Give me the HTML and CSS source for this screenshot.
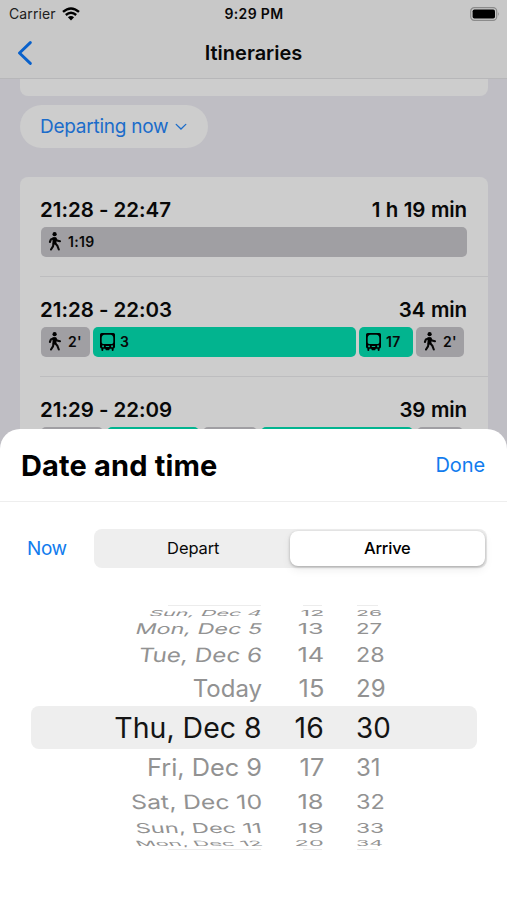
FILE: index.html
```html
<!DOCTYPE html>
<html lang="en">
<head>
<meta charset="utf-8">
<title>Itineraries</title>
<link rel="stylesheet" href="styles.css">
</head>
<body>
<svg width="0" height="0" class="defs">
  <symbol id="walk" viewBox="0 0 14 19">
    <circle cx="6.6" cy="2.2" r="2.1"/>
    <path d="M1.9 10 2.9 7.4 5.8 6.3 7.4 6.3 9 8.6 12 9.3M5.6 11.4 5 14.4 3 17.5M7.2 11.4 9.4 13.8 10.8 17.5" fill="none" stroke="currentColor" stroke-width="2.1" stroke-linecap="round" stroke-linejoin="round"/>
    <path d="M4.6 5.4h3.7l.2 6.8-4 .2z"/>
  </symbol>
  <symbol id="bus" viewBox="0 0 15 18">
    <path fill-rule="evenodd" d="M1.6 0h11.8Q15 0 15 1.6V13.4Q15 15.3 13.6 15.6V17Q13.6 18 12.7 18T11.7 17V15.8H9.8l-.7 1.4H5.9l-.7-1.4H3.3V17Q3.3 18 2.3 18T1.4 17V15.6Q0 15.3 0 13.4V1.6Q0 0 1.6 0ZM4.6 1.7Q1.7 2.1 1.7 5V9.3Q1.7 11 3.3 11H11.7Q13.3 11 13.3 9.3V5Q13.3 2.1 10.4 1.7ZM3 12.2a1 1 0 1 0 .1 0ZM12 12.2a1 1 0 1 0 .1 0ZM5.8 13v.9h3.4v-.9Z"/>
  </symbol>
</svg>
<main class="screen">
  <header class="topbar">
    <div class="status">
      <div class="carrier"><span>Carrier</span>
        <svg class="wifi" width="18" height="14" viewBox="0 0 18 14"><g fill="none" stroke="#000" stroke-width="2.4"><path d="M1 4.9Q9-2 17 4.9"/><path d="M3.8 8Q9 3.6 14.2 8"/></g><path d="M5.9 10.2Q9 7.7 12.1 10.2L9 13.4Z"/></svg>
      </div>
      <span class="clock">9:29 PM</span>
      <svg class="battery" width="30" height="14" viewBox="0 0 30 14"><rect x=".7" y=".7" width="26" height="12.6" rx="3.6" fill="none" stroke="#8b8b8b" stroke-width="1.2"/><rect x="2.6" y="2.4" width="22.4" height="9.2" rx="1.8"/><path d="M28 5Q29.8 7 28 9Z" fill="#8b8b8b"/></svg>
    </div>
    <div class="nav">
      <svg class="back" width="16" height="24" viewBox="0 0 16 24"><path d="M13.3 1.6 2.5 12 13.3 22.4" fill="none" stroke="#0961cb" stroke-width="2.9" stroke-linecap="round" stroke-linejoin="round"/></svg>
      <h1>Itineraries</h1>
    </div>
  </header>
  <div class="previous"></div>
  <button class="when"><span>Departing now</span><svg width="12" height="8" viewBox="0 0 12 8"><path d="M1.2 1.4 6 6 10.8 1.4" fill="none" stroke="currentColor" stroke-width="1.3" stroke-linecap="round"/></svg></button>
  <section class="trips">
    <article class="trip">
      <div class="times"><span>21:28 - 22:47</span><span class="dur">1 h 19 min</span></div>
      <div class="legs full"><div class="leg"><svg class="walk"><use href="#walk"/></svg>1:19</div></div>
    </article>
    <article class="trip">
      <div class="times"><span>21:28 - 22:03</span><span class="dur">34 min</span></div>
      <div class="legs direct">
        <div class="leg"><svg class="walk"><use href="#walk"/></svg>2'</div>
        <div class="leg ride"><svg class="bus"><use href="#bus"/></svg>3</div>
        <div class="leg ride"><svg class="bus"><use href="#bus"/></svg>17</div>
        <div class="leg"><svg class="walk"><use href="#walk"/></svg>2'</div>
      </div>
    </article>
    <article class="trip">
      <div class="times"><span>21:29 - 22:09</span><span class="dur">39 min</span></div>
      <div class="legs transfer"><div class="leg"></div><div class="leg ride"></div><div class="leg"></div><div class="leg ride"></div><div class="leg"></div></div>
    </article>
  </section>
  <section class="sheet">
    <header class="sheet-head"><h2>Date and time</h2><a>Done</a></header>
    <div class="mode"><a>Now</a><div class="segments"><span class="seg">Depart</span><span class="seg on">Arrive</span></div></div>
    <div class="wheel">
      <div class="row edge"></div>
      <div class="row u4"><span>Sun, Dec 4</span><span>12</span><span>26</span></div>
      <div class="row u3"><span>Mon, Dec 5</span><span>13</span><span>27</span></div>
      <div class="row u2"><span>Tue, Dec 6</span><span>14</span><span>28</span></div>
      <div class="row u1"><span>Today</span><span>15</span><span>29</span></div>
      <div class="row sel"><span>Thu, Dec 8</span><span>16</span><span>30</span></div>
      <div class="row d1"><span>Fri, Dec 9</span><span>17</span><span>31</span></div>
      <div class="row d2"><span>Sat, Dec 10</span><span>18</span><span>32</span></div>
      <div class="row d3"><span>Sun, Dec 11</span><span>19</span><span>33</span></div>
      <div class="row d4"><span>Mon, Dec 12</span><span>20</span><span>34</span></div>
      <div class="row edge"></div>
    </div>
  </section>
</main>
</body>
</html>
```
FILE: styles.css
```css
* { box-sizing: border-box; }
body { margin: 0; font-family: Inter, "Liberation Sans", sans-serif; color: #080808; }
h1, h2 { margin: 0; }
svg { flex: none; }
.defs { position: absolute; }
.screen { position: relative; width: 507px; height: 900px; overflow: hidden; background: #bfbec4; }

.topbar { height: 79px; background: #c8c8c8; border-bottom: 1px solid #b7b7b9; }
.status { display: grid; grid-template-columns: 1fr auto 1fr; align-items: center; height: 27px; padding: 0 7px 0 9px; font-size: 14px; }
.carrier { display: flex; align-items: center; gap: 6px; color: #202020; letter-spacing: .1px; }
.clock { margin-right: 1px; font-weight: 600; letter-spacing: .35px; }
.battery { justify-self: end; }
.nav { display: grid; grid-template-columns: 1fr auto 1fr; align-items: center; height: 51px; padding: 0 17px; }
.nav h1 { font-size: 20px; font-weight: 600; letter-spacing: 0; }

.previous { height: 17px; margin: 0 19px 0 20px; background: #cdcdcd; border-radius: 0 0 8px 8px; }
.when { display: flex; align-items: center; gap: 7px; width: 188px; height: 43px; margin: 9px 0 0 20px; padding: 0 0 0 20px; border: 0; border-radius: 22px; background: #cdcdcd; color: #1b6cca; font: 400 19px Inter, sans-serif; letter-spacing: -.25px; }

.trips { height: 300px; margin: 29px 19px 0 20px; border-radius: 8px; background: #cdcdcd; overflow: hidden; }
.trip { height: 100px; margin-left: 20px; padding: 20px 21px 0 0; border-bottom: 1px solid #bdbdbf; }
.times { display: flex; justify-content: space-between; height: 30px; line-height: 25px; font-size: 20.5px; font-weight: 600; letter-spacing: -.02px; }
.dur { letter-spacing: -.1px; word-spacing: .5px; }
.legs { display: grid; gap: 3px; height: 30px; padding-left: 1px; }
.direct { grid-template-columns: 49px 263px 54px 48px; }
.transfer { grid-template-columns: 62px 92px 54px 152px 46px; gap: 4px; }
.leg { display: flex; align-items: center; height: 30px; padding: 0 0 1px 7px; gap: 6px; border-radius: 5px; background: #a09fa3; font-size: 14px; font-weight: 600; letter-spacing: .3px; }
.ride { background: #02b48f; gap: 5px; }
.walk { width: 14px; height: 19px; }
.bus { width: 15px; height: 18px; }

.sheet { position: absolute; left: 0; right: 0; bottom: 0; height: 471.5px; border-radius: 20px 20px 0 0; background: #fff; }
.sheet a { color: #117cee; }
.sheet-head { display: flex; justify-content: space-between; align-items: center; height: 73.5px; padding: 0 22px; border-bottom: 1px solid #eee; }
.sheet-head h2 { font-size: 29px; letter-spacing: .15px; color: #000; margin: 1px 0 0 -1px; }
.sheet-head a { font-size: 20px; letter-spacing: -.1px; }
.mode { display: flex; align-items: center; justify-content: space-between; margin-top: 27px; padding: 0 20px 0 27px; }
.mode a { font-size: 19px; letter-spacing: -.4px; }
.segments { display: grid; grid-template-columns: 1fr 1fr; width: 393px; height: 39px; padding: 2px; border-radius: 8px; background: #eee; font-size: 16.5px; }
.seg { display: flex; align-items: center; justify-content: center; padding-bottom: 2px; letter-spacing: -.1px; }
.on { height: 35px; margin-left: -1px; font-weight: 500; letter-spacing: -.2px; color: #000; border-radius: 8px; background: #fff; box-shadow: 0 1px 3px #0004, 0 4px 10px #0001; }

.wheel { margin: 36px 30px 0 31px; }
.row { display: grid; grid-template-columns: 231px 62px 1fr; grid-template-rows: 100%; align-items: center; color: #929292; font-size: 24px; line-height: 1; white-space: nowrap; }
.row span { transform: scale(var(--x), var(--y)); }
.row span:nth-child(1) { justify-self: end; transform: scale(var(--dx, var(--x)), var(--y)) skewX(var(--skew, 0deg)); transform-origin: right center; }
.row span:nth-child(2) { justify-self: end; transform: scale(var(--hx, 1.06), var(--y)); transform-origin: right center; }
.row span:nth-child(3) { padding-left: 32px; transform-origin: 32px center; }
.edge { width: 347px; height: 3px; background: linear-gradient(90deg, #0000 137px, #ececec 0 230px, #0000 0 272px, #ececec 0 291px, #0000 0 326px, #ececec 0) 0 1px / 100% 1px no-repeat; }
.u4 { --x: .88; --dx: .9; --hx: .98; --y: .34; --skew: -12deg; height: 11px; }
.u3 { --x: .93; --dx: .97; --hx: 1.05; --y: .61; --skew: -10deg; height: 21px; }
.u2 { --x: .97; --dx: 1.01; --y: .82; --skew: -6deg; height: 32px; }
.u1 { --x: 1; --y: 1; height: 35px; }
.sel { --x: 1.03; --dx: 1.055; --hx: 1.05; --y: 1.03; height: 43px; border-radius: 8px; background: #eee; color: #141414; font-size: 27px; }
.sel span { margin-top: 2px; }
.d1 { --x: 1; --dx: 1.055; --y: 1; height: 38px; }
.d2 { --x: .98; --dx: 1.03; --y: .82; --skew: 3deg; height: 30px; }
.d3 { --x: .95; --dx: .98; --y: .57; --skew: 6deg; height: 21px; }
.d4 { --x: .89; --dx: .9; --hx: .98; --y: .3; --skew: 12deg; height: 12px; margin-bottom: -2px; }
```
